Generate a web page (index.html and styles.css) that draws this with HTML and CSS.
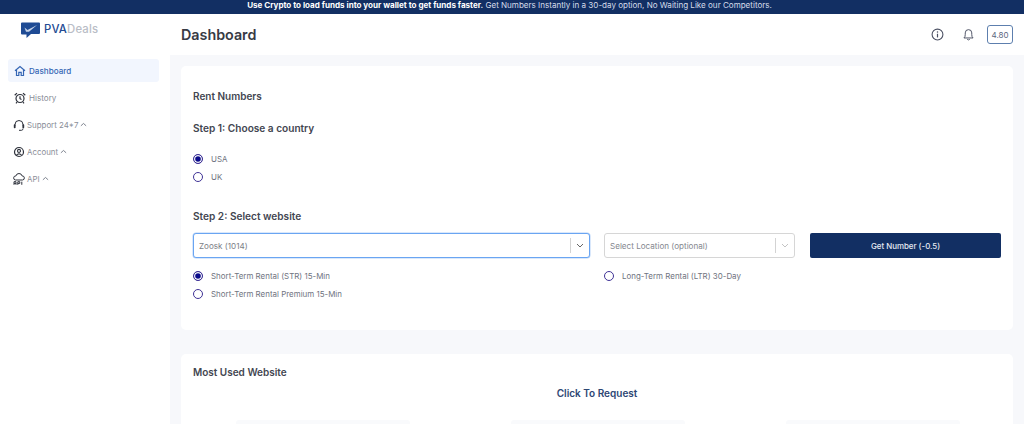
FILE: index.html
```html
<!DOCTYPE html>
<html lang="en">
<head>
<meta charset="utf-8">
<title>PVADeals Dashboard</title>
<link rel="stylesheet" href="styles.css">
</head>
<body>
<div class="banner"><b>Use Crypto to load funds into your wallet to get funds faster.</b> Get Numbers Instantly in a 30-day option, No Waiting Like our Competitors.</div>
<div class="app">
  <aside class="sidebar">
    <div class="logo">
      <svg class="logo-mark" viewBox="0 0 20 17" width="20" height="17"><path d="M0 1.500Q0 .5 1 .5H18Q19 .5 19 1.500V11Q19 12 18 12H10L5.500 16V12.500L1 12.500Q0 12.500 0 11.500Z" fill="#1f4b94"/><path d="M3.500 5.500L6.500 8L16 3L8 9.800H5Z" fill="#c6d3e8"/></svg>
      <span class="logo-text"><span class="logo-pva">PVA</span><span class="logo-deals">Deals</span></span>
    </div>
    <nav class="nav">
      <a class="nav-item active">
        <svg class="nav-icon" viewBox="0 0 12 12"><path d="M1 5.800L6 1.500L11 5.800M2.500 4.800V10.500H4.800V7.300H7.200V10.500H9.500V4.800" fill="none" stroke="#3566b4" stroke-width="1.200"/></svg>
        Dashboard
      </a>
      <a class="nav-item">
        <svg class="nav-icon" viewBox="0 0 12 12"><circle cx="6" cy="6.500" r="4" fill="none" stroke="#2f333d" stroke-width="1.200"/><path d="M6 4.300V6.700L7.500 7.600M.7 3.200L3 1.100M11.300 3.200L9 1.100M3 10L2 11.300M9 10L10 11.300" fill="none" stroke="#2f333d" stroke-width="1.200"/></svg>
        History
      </a>
      <a class="nav-item tight">
        <svg class="nav-icon" viewBox="0 0 12 12"><path d="M2 6.500V5.500A4 4 0 0 1 10 5.500V6.500M6 11.300H8.500Q10 11.300 10 9.500" fill="none" stroke="#2f333d" stroke-width="1"/><rect x=".8" y="5.300" width="1.800" height="3.900" rx=".8" fill="#2f333d"/><rect x="9.400" y="5.300" width="1.800" height="3.900" rx=".8" fill="#2f333d"/></svg>
        Support 24*7
        <svg class="caret" viewBox="0 0 8 5"><path d="M1 4L4 1.300L7 4" fill="none" stroke="#6d7280" stroke-width="1"/></svg>
      </a>
      <a class="nav-item tight">
        <svg class="nav-icon" viewBox="0 0 12 12"><circle cx="6" cy="6" r="4.500" fill="none" stroke="#2f333d" stroke-width="1.200"/><circle cx="6" cy="4.900" r="1.500" fill="none" stroke="#2f333d" stroke-width="1.100"/><path d="M3.200 9.300Q6 6.500 8.800 9.300" fill="none" stroke="#2f333d" stroke-width="1.100"/></svg>
        Account
        <svg class="caret" viewBox="0 0 8 5"><path d="M1 4L4 1.300L7 4" fill="none" stroke="#6d7280" stroke-width="1"/></svg>
      </a>
      <a class="nav-item tight">
        <svg class="nav-icon" viewBox="0 0 12 12"><path d="M2.500 7A2 2 0 0 1 2.800 3A3.300 3.300 0 0 1 9.200 3A2 2 0 0 1 9.500 7H2.500Z" fill="none" stroke="#2f333d" stroke-width="1"/><path d="M1 11.800V8.700H3V11.800M1 10.400H3M4.800 11.800V8.700H6.800V10.400H4.800M8.800 8.700V11.800" fill="none" stroke="#2f333d" stroke-width="1"/></svg>
        API
        <svg class="caret" viewBox="0 0 8 5"><path d="M1 4L4 1.300L7 4" fill="none" stroke="#6d7280" stroke-width="1"/></svg>
      </a>
    </nav>
  </aside>
  <div class="main">
    <header class="topbar">
      <h1 class="title">Dashboard</h1>
      <div class="top-actions">
        <svg class="top-icon info" viewBox="0 0 12 12"><circle cx="6" cy="6" r="5" fill="none" stroke="#4b5063" stroke-width="1"/><path d="M6 5.300V8.700" stroke="#4b5063" stroke-width="1.100"/><circle cx="6" cy="3.600" r=".7" fill="#4b5063"/></svg>
        <svg class="top-icon" viewBox="0 0 12 12"><path d="M1.800 9.200Q3 8.300 3 6V4.500A3 3 0 0 1 9 4.500V6Q9 8.300 10.200 9.200Z" fill="none" stroke="#4b5063" stroke-width=".9"/><path d="M4.800 10.400Q6 11.600 7.200 10.400" fill="none" stroke="#4b5063" stroke-width=".9"/></svg>
        <span class="balance">4.80</span>
      </div>
    </header>
    <main class="content">
      <section class="card rent">
        <h2 class="rent-title">Rent Numbers</h2>
        <h3 class="step">Step 1: Choose a country</h3>
        <div class="country">
          <label class="radio"><span class="dot on"></span>USA</label>
          <label class="radio"><span class="dot"></span>UK</label>
        </div>
        <h3 class="step step-two">Step 2: Select website</h3>
        <div class="form-row">
          <div class="col-site">
            <div class="select focus">
              <span class="value">Zoosk (1014)</span>
              <span class="sep"></span>
              <svg class="chev" viewBox="0 0 8 5"><path d="M1 1L4 4L7 1" fill="none" stroke="#666" stroke-width="1"/></svg>
            </div>
            <div class="options">
              <label class="radio"><span class="dot on"></span>Short-Term Rental (STR) 15-Min</label>
              <label class="radio"><span class="dot"></span>Short-Term Rental Premium 15-Min</label>
            </div>
          </div>
          <div class="col-loc">
            <div class="select">
              <span class="value placeholder">Select Location (optional)</span>
              <span class="sep"></span>
              <svg class="chev" viewBox="0 0 8 5"><path d="M1 1L4 4L7 1" fill="none" stroke="#c4c4c4" stroke-width="1"/></svg>
            </div>
            <div class="options">
              <label class="radio"><span class="dot"></span>Long-Term Rental (LTR) 30-Day</label>
            </div>
          </div>
          <button class="get" type="button">Get Number (-0.5)</button>
        </div>
      </section>
      <section class="card used">
        <h2 class="used-title">Most Used Website</h2>
        <p class="request">Click To Request</p>
        <div class="tiles">
          <div class="tile"></div>
          <div class="tile"></div>
          <div class="tile"></div>
        </div>
      </section>
    </main>
  </div>
</div>
</body>
</html>
```
FILE: styles.css
```css
* { box-sizing: border-box; }
html, body { margin: 0; height: 424px; overflow: hidden; }
body { font-family: Inter, "Liberation Sans", sans-serif; background: #fff; color: #3f4350; }
.banner { height: 14px; padding-right: 5px; background: #122f63; color: #d5dcea; font-size: 8.05px; line-height: 10px; text-align: center; }
.banner b { color: #fff; font-weight: 700; }
.app { display: flex; height: 410px; }
.sidebar { width: 170px; flex: none; background: #fff; padding: 7px 11px 0 8px; }
.logo { display: flex; align-items: flex-start; gap: 3px; height: 38px; padding-left: 13px; }
.logo-mark { margin-top: 1px; }
.logo-text { font-size: 11.3px; line-height: 16px; font-weight: 500; letter-spacing: .2px; }
.logo-pva { color: #234a92; }
.logo-deals { color: #b9bdc6; }
.nav { display: flex; flex-direction: column; }
.nav-item { display: flex; align-items: center; height: 27px; padding-left: 6px; font-size: 8.1px; color: #8a8e98; }
.nav-item.active { height: 23px; margin-bottom: 2px; color: #3566b4; background: #f2f6fe; border-radius: 3px; font-weight: 500; }
.nav-icon { width: 12px; height: 12px; margin-right: 3px; flex: none; }
.nav-item.tight { padding-left: 5px; font-size: 7.9px; }
.nav-item.tight .nav-icon { margin-right: 2px; }
.caret { width: 7px; height: 5px; margin-left: 2px; }
.main { flex: 1; min-width: 0; display: flex; flex-direction: column; }
.topbar { height: 41px; flex: none; display: flex; align-items: center; justify-content: space-between; padding: 0 11px; background: #fff; }
.title { margin: 0; font-size: 14.3px; font-weight: 600; color: #373a45; }
.top-actions { display: flex; align-items: center; gap: 12px; }
.top-icon { width: 13px; height: 13px; }
.info { margin-right: 6px; }
.balance { width: 26px; height: 19px; display: flex; align-items: center; justify-content: center; border: 1px solid #5d7fae; border-radius: 3px; font-size: 8px; color: #5b6680; }
.content { flex: 1; min-height: 0; background: #f7f8fb; padding: 11px 11px 0; overflow: hidden; }
.card { background: #fff; border-radius: 5px; padding: 0 12px; }
.rent { height: 264px; padding-top: 24px; margin-bottom: 24px; }
.rent-title { margin: 0; font-size: 10px; line-height: 12px; font-weight: 600; color: #434651; }
.step { margin: 20px 0 0; font-size: 10.1px; line-height: 12px; font-weight: 600; color: #434651; }
.country { margin-top: 19px; display: flex; flex-direction: column; gap: 6px; }
.step-two { margin-top: 27px; }
.radio { display: flex; align-items: center; height: 12px; font-size: 7.95px; color: #6f7380; }
.dot { width: 10px; height: 10px; border-radius: 50%; border: 1px solid #3f3296; margin-right: 8px; background: #fff; flex: none; }
.dot.on { background: #0a0a8a; box-shadow: inset 0 0 0 1.200px #fff; }
.form-row { display: flex; align-items: flex-start; margin-top: 11px; }
.col-site { width: 397px; flex: none; }
.col-loc { width: 191px; flex: none; margin-left: 14px; }
.select { height: 25px; display: flex; align-items: center; border: 1px solid #d6d6d6; border-radius: 3px; background: #fff; padding-left: 5px; font-size: 8.1px; }
.select.focus { border: 1.500px solid #6aa5f2; box-shadow: 0 0 0 .5px #b5d2f8; }
.value { flex: 1; color: #7b7e86; }
.placeholder { color: #85888f; }
.sep { width: 1px; height: 15px; background: #d3d3d3; margin-right: 5px; }
.chev { width: 8px; height: 5px; margin-right: 5px; }
.options { display: flex; flex-direction: column; gap: 6px; margin-top: 12px; }
.get { width: 191px; height: 25px; margin-left: 15px; flex: none; border: 0; border-radius: 2px; background: #122f63; color: #e6eaf2; font: 500 7.9px Inter, "Liberation Sans", sans-serif; }
.used { height: 100px; padding-top: 12px; }
.used-title { margin: 0; font-size: 10px; line-height: 12px; font-weight: 600; color: #434651; }
.request { margin: 9px 0 0; text-align: center; font-size: 10px; line-height: 12px; font-weight: 600; color: #2d4673; }
.tiles { display: flex; justify-content: space-between; margin-top: 21px; padding: 0 41px 0 43px; }
.tile { width: 174px; height: 20px; background: #f9fafc; border-radius: 3px; }
```
